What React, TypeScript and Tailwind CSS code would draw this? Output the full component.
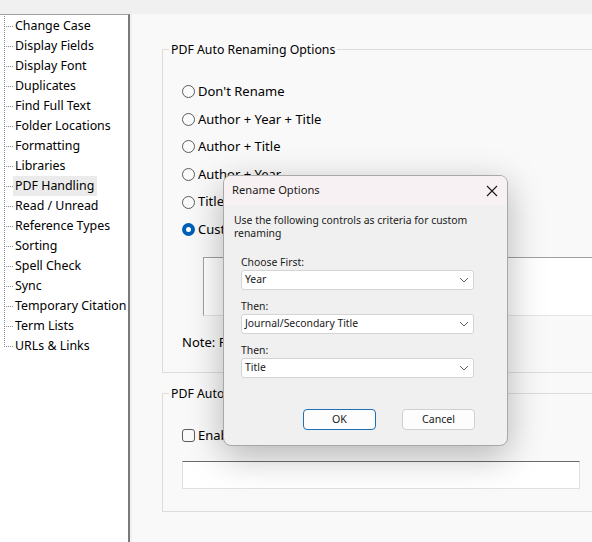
import React from "react";

const items = [
  "Change Case",
  "Display Fields",
  "Display Font",
  "Duplicates",
  "Find Full Text",
  "Folder Locations",
  "Formatting",
  "Libraries",
  "PDF Handling",
  "Read / Unread",
  "Reference Types",
  "Sorting",
  "Spell Check",
  "Sync",
  "Temporary Citation",
  "Term Lists",
  "URLs & Links",
];

const radios = [
  "Don't Rename",
  "Author + Year + Title",
  "Author + Title",
  "Author + Year",
  "Title + Year",
  "Custom",
];

function Radio({ checked }: { checked?: boolean }) {
  if (checked) {
    return (
      <span className="w-[13px] h-[13px] rounded-full bg-[#005fb8] flex items-center justify-center shrink-0">
        <span className="w-[5px] h-[5px] rounded-full bg-white" />
      </span>
    );
  }
  return <span className="w-[13px] h-[13px] rounded-full border border-[#5c5c5c] bg-[#fbfbfb] shrink-0" />;
}

function Chevron() {
  return (
    <svg width="10" height="6" viewBox="0 0 10 6" className="shrink-0">
      <path d="M1 1 L5 5 L9 1" fill="none" stroke="#606060" strokeWidth="1" />
    </svg>
  );
}

function Select({ value }: { value: string }) {
  return (
    <div className="w-[233px] h-[20px] bg-white border border-[#d4d4d4] rounded-[3px] flex items-center justify-between pl-[3px] pr-[4px] text-[10.4px] text-[#1a1a1a]">
      <span>{value}</span>
      <Chevron />
    </div>
  );
}

export default function App() {
  return (
    <div
      className="w-[592px] h-[542px] bg-[#f0f0f0] relative overflow-hidden text-black"
      style={{ fontFamily: '"Noto Sans", "Open Sans", sans-serif' }}
    >
      <div className="flex h-full pt-[14px]">
        {/* Sidebar */}
        <div className="w-[130px] h-full bg-white border-t border-t-[#a0a0a0] border-r-2 border-r-[#7a7a7a] shrink-0 relative">
          <div className="relative pt-[1px]">
            <div className="absolute left-[4px] top-[1px] h-[331px] border-l border-dotted border-[#8a8a8a]" />
            {items.map((it) => (
              <div key={it} className="h-[20px] flex items-center relative whitespace-nowrap">
                <span className="w-[9px] ml-[4px] border-t border-dotted border-[#8a8a8a] shrink-0" />
                <span
                  className={
                    "text-[12.4px] leading-[20px] whitespace-nowrap pl-[2px] pr-[3px] shrink-0 " +
                    (it === "PDF Handling" ? "bg-[#ebebeb]" : "")
                  }
                >
                  {it}
                </span>
              </div>
            ))}
          </div>
        </div>

        {/* Main */}
        <div className="flex-1 h-full bg-[#f9f9f9] ml-[2px] overflow-hidden">
          <div className="ml-[30px] mt-[35px] w-[520px]">
            {/* Group 1 */}
            <div className="relative border border-[#dcdcdc] h-[324px] pt-[28px]">
              <span className="absolute -top-[9px] left-[6px] bg-[#f9f9f9] px-[2px] text-[12.3px] leading-[18px]">
                PDF Auto Renaming Options
              </span>
              <div className="pl-[19px] flex flex-col">
                {radios.map((r, i) => (
                  <div key={r} className="h-[27.6px] flex items-center gap-[3px] text-[13px]">
                    <Radio checked={i === 5} />
                    <span>{r}</span>
                  </div>
                ))}
              </div>
              <div className="ml-[40px] mt-[13px] h-[59px] bg-white border-t border-l border-t-[#a0a0a0] border-l-[#a0a0a0] border-b border-b-[#e3e3e3]" />
              <div className="pl-[19px] mt-[17px] text-[13px] leading-[18px]">
                Note: File names are changed on import.
              </div>
            </div>

            {/* Group 2 */}
            <div className="relative border border-[#dcdcdc] h-[119px] mt-[20px]">
              <span className="absolute -top-[9px] left-[6px] bg-[#f9f9f9] px-[2px] text-[12.3px] leading-[18px]">
                PDF Auto Import Folder
              </span>
              <div className="pl-[19px] pt-[33px] flex items-center gap-[3px] text-[13px] h-[50px]">
                <span className="w-[13px] h-[13px] rounded-[3px] border border-[#5c5c5c] bg-[#fbfbfb] shrink-0" />
                <span>Enable automatic importing</span>
              </div>
              <div className="ml-[19px] mt-[17px] w-[398px] h-[28px] bg-white border border-[#e0e0e0] border-t-[#6a6a6a]" />
            </div>
          </div>
        </div>
      </div>

      {/* Dialog */}
      <div className="absolute left-[223px] top-[175px] w-[285px] h-[271px] rounded-[8px] border border-[#a8a8a8] bg-[#f0f0f0] overflow-hidden shadow-[0_10px_36px_rgba(0,0,0,0.28)]">
        <div className="h-[29px] bg-[#f8f1f3] flex items-center justify-between pl-[8px] pr-[9px]">
          <span className="text-[11.2px] text-[#1a1a1a]">Rename Options</span>
          <svg width="12" height="12" viewBox="0 0 12 12">
            <path d="M1 1 L11 11 M11 1 L1 11" stroke="#1a1a1a" strokeWidth="1.1" />
          </svg>
        </div>
        <div className="px-[10px] pt-[9px] text-[10.4px] leading-[13px] text-[#1a1a1a] whitespace-nowrap">
          Use the following controls as criteria for custom
          <br />
          renaming
        </div>
        <div className="pl-[17px] text-[10.4px] text-[#1a1a1a]">
          <div className="mt-[15px] leading-[14px]">Choose First:</div>
          <div className="mt-[1px]">
            <Select value="Year" />
          </div>
          <div className="mt-[9px] leading-[14px]">Then:</div>
          <div className="mt-[1px]">
            <Select value="Journal/Secondary Title" />
          </div>
          <div className="mt-[9px] leading-[14px]">Then:</div>
          <div className="mt-[1px]">
            <Select value="Title" />
          </div>
        </div>
        <div className="flex justify-end gap-[26px] pr-[32px] mt-[31px] text-[10.6px] text-[#1a1a1a]">
          <div className="w-[73px] h-[21px] rounded-[4px] border-[1.5px] border-[#1f6fb5] bg-[#fdfdfd] flex items-center justify-center">
            OK
          </div>
          <div className="w-[73px] h-[21px] rounded-[4px] border border-[#d0d0d0] bg-[#fdfdfd] flex items-center justify-center">
            Cancel
          </div>
        </div>
      </div>
    </div>
  );
}
